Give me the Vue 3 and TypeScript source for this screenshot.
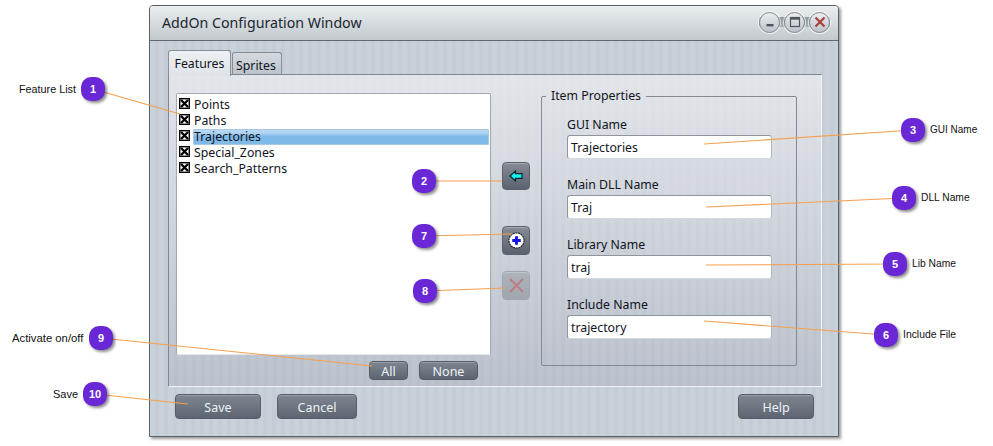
<script setup lang="ts">
interface Callout { n: number; x: number; y: number; tx: number; ty: number; label?: string; lx?: number; fs?: number }
const callouts: Callout[] = [
  { n: 1, x: 93, y: 89, tx: 180, ty: 114, label: 'Feature List', lx: 19, fs: 10.8 },
  { n: 2, x: 424, y: 181, tx: 502, ty: 181 },
  { n: 3, x: 913, y: 130, tx: 704, ty: 144, label: 'GUI Name', lx: 930, fs: 10 },
  { n: 4, x: 904, y: 198, tx: 706, ty: 207, label: 'DLL Name', lx: 921, fs: 10.25 },
  { n: 5, x: 895, y: 264, tx: 706, ty: 265, label: 'Lib Name', lx: 912, fs: 10.3 },
  { n: 6, x: 886, y: 335, tx: 704, ty: 321, label: 'Include File', lx: 903, fs: 10.4 },
  { n: 7, x: 424, y: 236, tx: 512, ty: 234 },
  { n: 8, x: 425, y: 291, tx: 505, ty: 288 },
  { n: 9, x: 101, y: 338, tx: 372, ty: 366, label: 'Activate on/off', lx: 12, fs: 11.3 },
  { n: 10, x: 95, y: 394, tx: 188, ty: 404, label: 'Save', lx: 53, fs: 11 },
]
const items = ['Points', 'Paths', 'Trajectories', 'Special_Zones', 'Search_Patterns']
const fields = [
  { label: 'GUI Name', value: 'Trajectories' },
  { label: 'Main DLL Name', value: 'Traj' },
  { label: 'Library Name', value: 'traj' },
  { label: 'Include Name', value: 'trajectory' },
]
</script>

<template>
  <div class="stage">
    <div class="window">
      <header class="titlebar">
        <span class="title">AddOn Configuration Window</span>
        <div class="controls">
          <span class="ctl">
            <svg width="12" height="12" viewBox="0 0 12 12"><rect x="2.5" y="8" width="7" height="2.4" fill="#4f565e" /></svg>
          </span>
          <span class="ctl">
            <svg width="12" height="12" viewBox="0 0 12 12"><rect x="1.5" y="1.5" width="9" height="9" fill="none" stroke="#4f565e" stroke-width="1.2" /><rect x="1.5" y="1.5" width="9" height="2.2" fill="#4f565e" /></svg>
          </span>
          <span class="ctl">
            <svg width="12" height="12" viewBox="0 0 12 12"><path d="M1.5 1.5 10.5 10.5M10.5 1.5 1.5 10.5" stroke="#a8403c" stroke-width="2.2" /></svg>
          </span>
        </div>
      </header>

      <main class="body">
        <div class="tabs">
          <span class="tab active">Features</span>
          <span class="tab sprites">Sprites</span>
        </div>
        <section class="panel">
          <div class="left">
            <ul class="list">
              <li v-for="(item, i) in items" :key="item" class="row">
                <svg class="check" width="11" height="11" viewBox="0 0 11 11">
                  <rect x="0.7" y="0.7" width="9.6" height="9.6" fill="#fff" stroke="#000" stroke-width="1.4" />
                  <path d="M2 2 9 9M9 2 2 9" stroke="#000" stroke-width="2.3" />
                </svg>
                <span class="name" :class="{ selected: i === 2 }">{{ item }}</span>
              </li>
            </ul>
            <div class="list-actions">
              <button class="btn all">All</button>
              <button class="btn none">None</button>
            </div>
          </div>

          <div class="tools">
            <button class="tool">
              <svg width="14" height="12" viewBox="0 0 14 12">
                <path d="M1 6 6.5 1V3.6H13V8.4H6.5V11Z" fill="#19f0f0" stroke="#06262b" stroke-width="1.2" />
              </svg>
            </button>
            <button class="tool plus">
              <svg width="17" height="17" viewBox="0 0 18 18">
                <circle cx="9" cy="9" r="8" fill="#fff" stroke="#111" stroke-width="1.1" stroke-dasharray="2 0.8" />
                <path d="M9 4.5V13.5M4.5 9H13.5" stroke="#1010e8" stroke-width="3" />
              </svg>
            </button>
            <button class="tool disabled">
              <svg width="15" height="15" viewBox="0 0 15 15">
                <path d="M1 1 14 14M14 1 1 14" stroke="#bd7c80" stroke-width="2" />
              </svg>
            </button>
          </div>

          <fieldset class="group">
            <legend>Item Properties</legend>
            <div v-for="f in fields" :key="f.label" class="field">
              <label>{{ f.label }}</label>
              <div class="input">{{ f.value }}</div>
            </div>
          </fieldset>
        </section>

        <footer class="actions">
          <button class="btn big save">Save</button>
          <button class="btn big cancel">Cancel</button>
          <button class="btn big help">Help</button>
        </footer>
      </main>
    </div>

    <svg class="lines" width="993" height="446" viewBox="0 0 993 446">
      <line v-for="c in callouts" :key="c.n" :x1="c.x" :y1="c.y" :x2="c.tx" :y2="c.ty" />
    </svg>
    <template v-for="c in callouts" :key="c.n">
      <span class="badge" :style="{ left: c.x - 12 + 'px', top: c.y - 12 + 'px' }">{{ c.n }}</span>
      <span v-if="c.label" class="note" :style="{ left: c.lx + 'px', top: c.y - 8 + 'px', fontSize: c.fs + 'px' }">{{ c.label }}</span>
    </template>
  </div>
</template>

<style>
html, body { margin: 0; background: #fff; }
</style>

<style scoped>
.stage {
  position: relative;
  width: 993px;
  height: 446px;
  padding: 5px 0 0 149px;
  box-sizing: border-box;
  overflow: hidden;
  font-family: "Noto Sans", Tahoma, sans-serif;
  font-size: 12px;
  color: #10141c;
}
.window {
  width: 690px;
  height: 432px;
  box-sizing: border-box;
  border: 1px solid #59616c;
  border-radius: 4px 4px 0 0;
  box-shadow: 2px 2px 3px rgba(0, 0, 0, .4);
  display: flex;
  flex-direction: column;
  background:
    repeating-linear-gradient(90deg, rgba(255, 255, 255, .09) 0 5px, rgba(255, 255, 255, 0) 5px 9px),
    #c4ccd5;
}
.titlebar {
  height: 35px;
  flex: none;
  box-sizing: border-box;
  border-bottom: 1px solid #5f6873;
  border-radius: 3px 3px 0 0;
  background: linear-gradient(#e9eef1, #c2c9cd);
  display: flex;
  align-items: center;
  justify-content: space-between;
  padding: 0 8px 2px 12px;
}
.title {
  font-size: 14.2px;
  color: #20262e;
}
.controls {
  display: flex;
  gap: 4px;
  background: linear-gradient(#8f979d, #a8afb3) center / 100% 10px no-repeat;
}
.ctl {
  width: 19px;
  height: 19px;
  border-radius: 50%;
  border: 1px solid #80878e;
  background: linear-gradient(#eceff1, #bcc2c8);
  box-shadow: 0 0 0 1px rgba(255, 255, 255, .7);
  display: flex;
  align-items: center;
  justify-content: center;
}
.body {
  flex: 1;
  padding: 9px 16px 0 18px;
  display: flex;
  flex-direction: column;
}
.tabs {
  height: 24px;
  display: flex;
  align-items: flex-end;
  gap: 1px;
  position: relative;
  z-index: 1;
}
.tab {
  height: 22px;
  padding: 3px 4px 0;
  display: flex;
  align-items: center;
  box-sizing: border-box;
  border: 1px solid #868e98;
  border-bottom: none;
  border-radius: 3px 3px 0 0;
  background: linear-gradient(#d5dae0, #bcc3cc);
  font-size: 12.3px;
}
.tab.sprites {
  padding: 3px 5px 0 3px;
}
.tab.active {
  height: 26px;
  margin-bottom: -2px;
  width: 63px;
  justify-content: center;
  padding: 0;
  background: linear-gradient(#eef1f3, #dfe3e8);
}
.panel {
  height: 313px;
  flex: none;
  box-sizing: border-box;
  border: 1px solid #7f8892;
  border-right-color: #f2f4f6;
  border-bottom-color: #f2f4f6;
  background:
    repeating-linear-gradient(90deg, rgba(255, 255, 255, .06) 0 5px, rgba(255, 255, 255, 0) 5px 9px),
    linear-gradient(#e1e4e9, #b8bfca);
  display: flex;
  padding: 0 0 0 7px;
}
.left {
  width: 315px;
  flex: none;
  padding-top: 18px;
}
.list {
  list-style: none;
  margin: 0;
  padding: 3px 1px 0 2px;
  height: 262px;
  box-sizing: border-box;
  background: #fff;
  border: 1px solid #a3a9b1;
  border-bottom-color: #e6e8eb;
  border-radius: 2px;
}
.row {
  height: 16px;
  display: flex;
  align-items: center;
  font-size: 12.3px;
}
.check {
  flex: none;
  margin: -4px 3px 0 0;
}
.name {
  flex: 1;
  height: 16px;
  line-height: 15px;
  box-sizing: border-box;
  padding-left: 1px;
}
.name.selected {
  background: linear-gradient(#bcdcf5 0, #a9d1f1 30%, #7fb9e7 45%, #80bbe8 100%);
  box-shadow: inset 0 0 0 1px #a9c7e0;
  border-radius: 2px;
}
.list-actions {
  display: flex;
  justify-content: flex-end;
  gap: 11px;
  padding: 6px 13px 0 0;
}
.btn {
  font: inherit;
  font-size: 12.5px;
  color: #eef2f6;
  height: 19px;
  padding: 1px 0 0;
  border: 1px solid #555d68;
  border-radius: 4px;
  background: linear-gradient(#7f8691, #5d6572);
  box-shadow: inset 0 1px 0 rgba(255, 255, 255, .2);
}
.all { width: 39px; }
.none { width: 59px; }
.tools {
  width: 28px;
  flex: none;
  margin-left: 11px;
  padding-top: 87px;
  display: flex;
  flex-direction: column;
}
.tool {
  width: 28px;
  height: 29px;
  padding: 0;
  border: 1px solid #5b626d;
  border-radius: 4px;
  background: linear-gradient(#868d97, #5a6270);
  box-shadow: inset 0 1px 0 rgba(255, 255, 255, .25);
  display: flex;
  align-items: center;
  justify-content: center;
}
.tool:first-child { height: 28px; }
.tool.plus { margin-top: 36px; }
.tool.disabled {
  margin-top: 16px;
  background: linear-gradient(#aeb4bc, #a0a6af);
  border-color: #a0a6ae;
}
.group {
  width: 256px;
  height: 278px;
  box-sizing: border-box;
  margin: 13px 0 0 11px;
  padding: 12px 0 0 25px;
  border: 1px solid #838a94;
  border-radius: 2px;
  min-width: 0;
}
.group legend {
  margin-left: -21px;
  padding: 0 5px;
  font-size: 12.3px;
  line-height: 16px;
}
.field {
  margin-bottom: 17px;
}
.field label {
  display: block;
  height: 16px;
  line-height: 18px;
  font-size: 12.3px;
  margin-bottom: 3px;
}
.input {
  width: 205px;
  height: 24px;
  box-sizing: border-box;
  padding-left: 3px;
  line-height: 24px;
  font-size: 12.3px;
  background: #fff;
  border: 1px solid #8f959d;
  border-bottom-color: #d5d8dc;
  border-right-color: #b4b9c0;
  border-radius: 3px;
}
.actions {
  display: flex;
  padding: 7px 8px 0 7px;
}
.big { height: 25px; }
.save { width: 86px; }
.cancel { width: 80px; margin-left: 16px; }
.help { width: 76px; margin-left: auto; }
.lines {
  position: absolute;
  left: 0;
  top: 0;
  pointer-events: none;
}
.lines line {
  stroke: #f6a04d;
  stroke-width: 1.1;
}
.badge {
  position: absolute;
  width: 24px;
  height: 24px;
  border-radius: 10px;
  background: #6a27d6;
  box-shadow: 2px 2px 3px rgba(0, 0, 0, .45);
  color: #fff;
  font: bold 11px/24px "Liberation Sans", Arial, sans-serif;
  text-align: center;
}
.note {
  position: absolute;
  font-family: "Liberation Sans", Arial, sans-serif;
  line-height: 16px;
  color: #111;
  white-space: nowrap;
}
</style>
